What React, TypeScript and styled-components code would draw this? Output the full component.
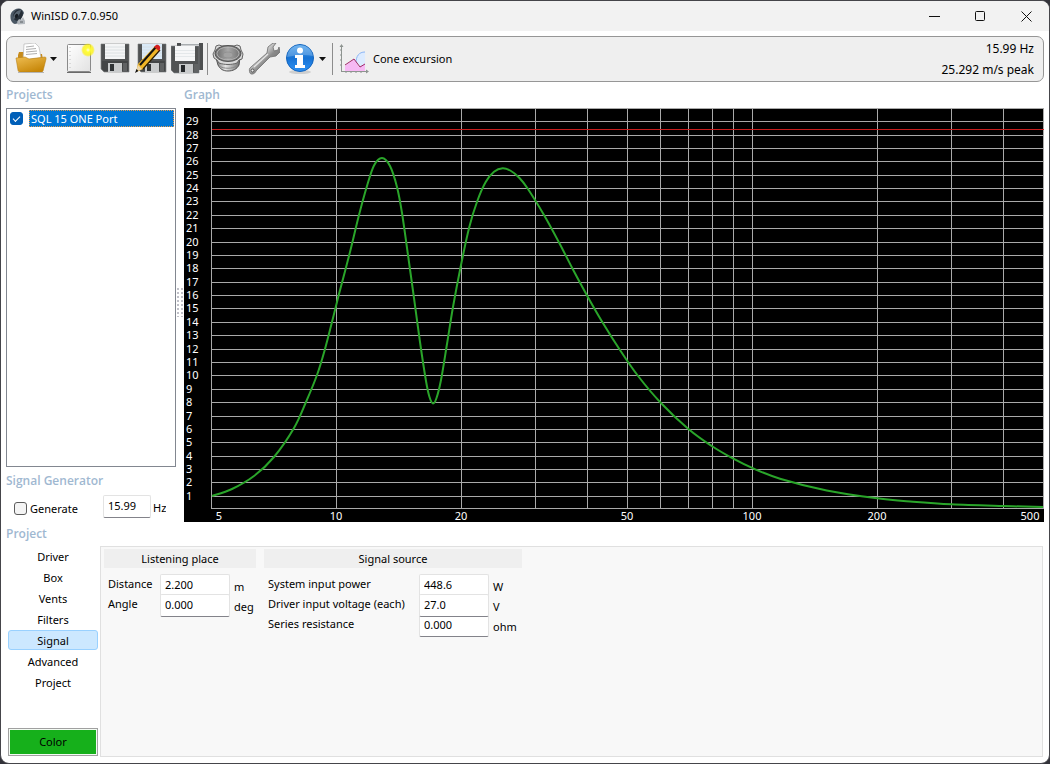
import React from "react";
import styled, { createGlobalStyle, css } from "styled-components";

const GlobalStyle = createGlobalStyle`
  *, *::before, *::after { box-sizing: border-box; }
  body {
    margin: 0;
    background: #33333a;
    color: #000;
    font: 12px/16px "Noto Sans", "Open Sans", sans-serif;
  }
  button, input { font: inherit; color: inherit; }
`;

const Window = styled.div`
  min-height: 100vh;
  display: flex;
  flex-direction: column;
  background: #fff;
  border: 1px solid #45454a;
  border-radius: 9px;
  overflow: hidden;
`;

const TitleBar = styled.header`
  display: flex;
  align-items: center;
  height: 30px;
  background: #f2f2f2;
  padding-left: 8px;
`;

const Title = styled.h1`
  flex: 1;
  margin: 0 0 0 5px;
  font-size: 11px;
  font-weight: 400;
`;

const CaptionButton = styled.button`
  display: grid;
  place-items: center;
  width: 46px;
  height: 30px;
  padding: 0;
  border: 0;
  background: none;
`;

const Toolbar = styled.div`
  display: flex;
  align-items: center;
  gap: 4px;
  height: 46px;
  margin: 5px 5px 0;
  padding: 0 9px 0 8px;
  border: 1px solid #969696;
  border-radius: 7px;
  background: #efefef;
`;

const ToolButton = styled.button`
  display: flex;
  align-items: center;
  gap: 4px;
  padding: 0;
  border: 0;
  background: none;
  font-size: 11px;
  line-height: 14px;
`;

const DropButton = styled(ToolButton)`
  width: 12px;
  height: 32px;
  margin-left: -4px;
  justify-content: center;
`;

const Separator = styled.span`
  width: 1px;
  height: 32px;
  background: #8c8c8c;
`;

const Readout = styled.output`
  margin-left: auto;
  text-align: right;
  line-height: 21px;
`;

const Upper = styled.main`
  display: grid;
  grid-template-columns: 170px 8px minmax(0, 1fr);
  padding: 0 5px;
`;

const Column = styled.section`
  display: flex;
  flex-direction: column;
`;

const Heading = styled.h2<{ $height: number }>`
  display: flex;
  align-items: center;
  height: ${(p) => p.$height}px;
  margin: 0;
  font-family: "Open Sans", "Noto Sans", sans-serif;
  font-size: 12px;
  font-weight: 600;
  color: #9fb8d1;
`;

const ProjectList = styled.ul`
  flex: 1;
  margin: 0;
  padding: 1px;
  list-style: none;
  border: 1px solid #828790;
`;

const ProjectItem = styled.li`
  label {
    display: flex;
    align-items: center;
    gap: 6px;
    padding-left: 2px;
  }
`;

const ProjectName = styled.span`
  flex: 1;
  height: 17px;
  padding-left: 1px;
  border: 1px dotted #e89c4a;
  background: #0078d7;
  color: #fff;
  font-size: 11px;
  line-height: 15px;
`;

const Tick = styled.input`
  appearance: none;
  width: 13px;
  height: 13px;
  margin: 0;
  border: 1px solid #5c5c5c;
  border-radius: 3px;
  background: #f4f4f4;
  display: grid;
  place-items: center;
  &:checked {
    border-color: #005fb8;
    background: #005fb8;
  }
  &:checked::after {
    content: "";
    width: 7px;
    height: 4px;
    border: solid #fff;
    border-width: 0 0 1px 1px;
    transform: rotate(-45deg);
    margin-bottom: 2px;
  }
`;

const GeneratorRow = styled.div`
  display: flex;
  align-items: flex-start;
  height: 27px;
  padding-left: 8px;
  font-size: 11px;
  label {
    display: flex;
    align-items: center;
    gap: 3px;
    width: 89px;
    height: 27px;
  }
`;

const Field = styled.input<{ $width: number }>`
  width: ${(p) => p.$width}px;
  height: 23px;
  padding: 0 0 3px 4px;
  border: 1px solid #e3e3e3;
  border-bottom-color: #83838a;
  border-radius: 2px;
  background: #fff;
  font-size: 11px;
`;

const Unit = styled.span<{ $gap?: number }>`
  height: 17px;
  margin-top: 4px;
  padding-left: ${(p) => p.$gap ?? 4}px;
  overflow: hidden;
  line-height: 18px;
`;

const Splitter = styled.div`
  display: grid;
  place-items: center;
  i {
    width: 8px;
    height: 30px;
    background: radial-gradient(circle at 2px 2px, #c0c0c8 1px, transparent 1px) 0 0 / 4px 4px;
  }
`;

const Chart = styled.svg`
  display: block;
  width: 100%;
  height: auto;
  background: #000;
  text {
    fill: #fff;
    font: 11px "Noto Sans", "Open Sans", sans-serif;
  }
`;

const Lower = styled.section`
  flex: 1;
  display: flex;
  gap: 2px;
  padding: 0 6px 6px 7px;
`;

const Nav = styled.nav`
  display: flex;
  flex-direction: column;
  gap: 1px;
  width: 90px;
`;

const NavButton = styled.button<{ $active?: boolean }>`
  height: 20px;
  padding: 1px 0 0;
  border: 1px solid transparent;
  border-radius: 3px;
  background: none;
  font-size: 11px;
  line-height: 18px;
  ${(p) =>
    p.$active &&
    css`
      border-color: #99d1ff;
      background: #cce8ff;
    `}
`;

const ColorButton = styled.button`
  height: 28px;
  margin: auto 0 1px;
  padding: 0;
  border: 1px solid #a0a0a0;
  background: #16b01b;
  box-shadow: inset 0 0 0 1px #f4fbf4;
  font-size: 11px;
`;

const Panel = styled.div`
  flex: 1;
  display: flex;
  align-items: flex-start;
  gap: 8px;
  padding: 2px 3px;
  border: 1px solid #e0e0e0;
  background: #f8f8f8;
`;

const Group = styled.fieldset<{ $width: number }>`
  width: ${(p) => p.$width}px;
  margin: 0;
  padding: 0;
  border: 0;
  font-size: 11px;
`;

const GroupTitle = styled.legend`
  width: 100%;
  height: 19px;
  margin-bottom: 6px;
  padding: 0;
  background: #efefef;
  line-height: 19px;
  text-align: center;
`;

const FieldRow = styled.div<{ $labelWidth: number; $under?: boolean }>`
  display: grid;
  grid-template-columns: ${(p) => p.$labelWidth}px 70px 1fr;
  position: relative;
  z-index: ${(p) => (p.$under ? 0 : 1)};
  height: 20px;
  padding-left: 4px;
  label {
    line-height: 20px;
    white-space: nowrap;
  }
`;

/* ---- icons ---- */

const AppIcon = () => (
  <svg width="17" height="17" viewBox="0 0 17 17" aria-hidden="true">
    <path d="M9.500.5C4 1 1 5 1.500 9.500c0 3 2 6 4.500 6.500l4-1 2-4 3-6c-1-3-3-4.700-5.500-4.500z" fill="#4a5764" />
    <ellipse cx="9" cy="7" rx="4.500" ry="6" transform="rotate(28 9 7)" fill="#252d36" />
    <path d="M4 11c0-5 4-9 8-9-1 5-4 8-8 9z" fill="#5a6672" />
    <ellipse cx="7.500" cy="8" rx="1.500" ry="2.200" transform="rotate(28 7.500 8)" fill="#161b21" />
    <path d="M8 14l2-3 2 1 2-3 2 4v3l-7 .5z" fill="#b3b8bd" />
    <path d="M11 14h3" stroke="#5c6266" />
  </svg>
);

const FolderIcon = () => (
  <svg width="32" height="32" viewBox="0 0 32 32" aria-hidden="true">
    <defs>
      <linearGradient id="folder" x1="0" y1="0" x2="0.6" y2="1">
        <stop offset="0" stopColor="#eebd52" />
        <stop offset="1" stopColor="#c78709" />
      </linearGradient>
    </defs>
    <path d="M3 12l1-3h5l3 2h15l1 6H3z" fill="#c78b1b" />
    <path d="M9 1l11-1 4 4 2 11-18 2z" fill="#fff" stroke="#b9b9b9" strokeWidth=".7" />
    <path d="M11 4l8-1M11 6.500l10-1M11 9l11-1M11 11.500l11-1" stroke="#9b9b9b" strokeWidth=".8" />
    <path d="M1 15l9-1 4 2 16-2c1 0 1 1 1 2l-3 12-1 1H5c-1 0-2-1-2-2z" fill="url(#folder)" stroke="#b97f12" strokeWidth=".6" />
    <path d="M3 29.500h26" stroke="#b4b4b4" />
  </svg>
);

const NewIcon = () => (
  <svg width="32" height="32" viewBox="0 0 32 32" aria-hidden="true">
    <defs>
      <radialGradient id="star">
        <stop offset="0" stopColor="#fffde0" />
        <stop offset=".3" stopColor="#ffff3a" />
        <stop offset=".75" stopColor="#fff200" stopOpacity=".7" />
        <stop offset="1" stopColor="#fff200" stopOpacity="0" />
      </radialGradient>
      <linearGradient id="sheet" x2="1" y2="1">
        <stop offset="0" stopColor="#fff" />
        <stop offset="1" stopColor="#e2e2e2" />
      </linearGradient>
    </defs>
    <rect x="4.500" y="1.500" width="23" height="27" rx="1" fill="url(#sheet)" stroke="#8a8a8a" />
    <path d="M7 4v23" stroke="#bdbdbd" strokeDasharray="1 3" />
    <path d="M4 29.500h24" stroke="#6a6a6a" />
    <circle cx="25" cy="7" r="7" fill="url(#star)" />
  </svg>
);

const Floppy = ({ label = "#f4f5f6" }: { label?: string }) => (
  <>
    <path d="M2 1h28v28H5l-3-3z" fill="#505253" stroke="#77797a" strokeWidth=".6" />
    <path d="M3 18h26v10H5l-2-2z" fill="#434546" />
    <path d="M6 1h20v15H6z" fill={label} />
    <path d="M6 4h20M6 7h20M6 10h20M6 13h20" stroke="#d5dade" strokeWidth=".8" />
    <path d="M9 20h14v9H9z" fill="#c9cbcc" />
    <path d="M11 21h4v7h-4z" fill="#303335" />
    <path d="M24 20h4v8h-4z" fill="#606263" />
  </>
);

const SaveIcon = () => (
  <svg width="32" height="32" viewBox="0 0 32 32" aria-hidden="true">
    <Floppy />
  </svg>
);

const EditIcon = () => (
  <svg width="32" height="32" viewBox="0 0 32 32" aria-hidden="true">
    <g transform="translate(1 0)">
      <Floppy label="#d9e9f7" />
    </g>
    <path d="M1 29l2-8 17-18 5 4L8 26z" fill="#f0b628" />
    <path d="M5 22L21 4" stroke="#111" strokeWidth="2" />
    <path d="M8 26L25 7" stroke="#2b1c00" strokeWidth="1.200" />
    <path d="M19 4l2-2c2-1 5 1 4 4l-1 2z" fill="#d31f1f" />
    <path d="M1 29l2-7 4 4z" fill="#ecd6aa" />
    <path d="M0 30l1.500-4 2 2z" fill="#111" />
  </svg>
);

const SaveAllIcon = () => (
  <svg width="32" height="32" viewBox="0 0 32 32" aria-hidden="true">
    <path d="M6 0h26v27H6z" fill="#4d4f50" />
    <path d="M10 0h18v12H10z" fill="#eef0f1" />
    <path d="M10 1.500h18" stroke="#a9adb0" />
    <path d="M0 3h28v27H3l-3-3z" fill="#515354" stroke="#84878a" strokeWidth=".6" />
    <path d="M4 3h20v15H4z" fill="#f6f7f8" />
    <path d="M4 7.500h20M4 10.500h20M4 13.500h20" stroke="#dfe3e6" strokeWidth=".8" />
    <path d="M8 21h14v9H8z" fill="#c9cbcc" />
    <path d="M10 22h4v7h-4z" fill="#25282a" />
    <path d="M23 21h4v8h-4z" fill="#606263" />
  </svg>
);

const DriverIcon = () => (
  <svg width="32" height="32" viewBox="0 0 32 32" aria-hidden="true">
    <defs>
      <linearGradient id="cone">
        <stop offset="0" stopColor="#717171" />
        <stop offset=".5" stopColor="#a9a9a9" />
        <stop offset="1" stopColor="#777" />
      </linearGradient>
      <linearGradient id="basket">
        <stop offset="0" stopColor="#777" />
        <stop offset=".4" stopColor="#e4e4e4" />
        <stop offset="1" stopColor="#6d6d6d" />
      </linearGradient>
    </defs>
    <path d="M4 15l2 7c2 4 5 6 10 6s9-2 11-6l1-7z" fill="url(#basket)" stroke="#555" />
    <path d="M7 23c5 3 13 3 18 0" fill="none" stroke="#888" />
    <path d="M4 3l3-1 3 1h12l3-1 3 1 1 4 2 4-1 5-3 1-2 3c-6 2-12 2-18 0l-2-3-3-2-1-4 2-4z" fill="#d8d8d8" stroke="#666" />
    <ellipse cx="16" cy="10.500" rx="13" ry="8" fill="#747474" stroke="#555" />
    <ellipse cx="16" cy="10.500" rx="11" ry="6.500" fill="url(#cone)" stroke="#c4c4c4" strokeWidth=".7" />
    <ellipse cx="16" cy="12" rx="5" ry="3" fill="#a2a2a2" stroke="#8c8c8c" strokeWidth=".7" />
  </svg>
);

const WrenchIcon = () => (
  <svg width="32" height="32" viewBox="0 0 32 32" aria-hidden="true">
    <defs>
      <linearGradient id="steel" x2="1" y2="1">
        <stop offset=".3" stopColor="#eeeeee" />
        <stop offset=".55" stopColor="#8b8b8b" />
        <stop offset="1" stopColor="#5b5b5b" />
      </linearGradient>
    </defs>
    <path
      d="M20 4l5-4 3 0-3 4 1 4 4-1 1-3 1 5-4 4-6 1L8 28c-1 3-5 4-6 2s-1-5 1-6L19 10z"
      fill="url(#steel)"
      stroke="#777"
      strokeWidth=".9"
    />
    <path d="M6 24L20 11" stroke="#e6e6e6" strokeWidth="1.200" />
    <circle cx="4.500" cy="27.500" r="1.500" fill="#eee" stroke="#555" />
  </svg>
);

const InfoIcon = () => (
  <svg width="32" height="32" viewBox="0 0 32 32" aria-hidden="true">
    <defs>
      <linearGradient id="info" x2="0" y2="1">
        <stop offset="0" stopColor="#4ba2ed" />
        <stop offset=".5" stopColor="#1772d3" />
        <stop offset="1" stopColor="#2e92f5" />
      </linearGradient>
    </defs>
    <ellipse cx="16" cy="29" rx="11" ry="2" fill="#cfcfcf" />
    <circle cx="16" cy="15" r="13.500" fill="url(#info)" stroke="#1264be" />
    <path d="M3 14C4 6 9 2 16 2s12 4 13 11c-8-2-17-1-26 1z" fill="#fff" opacity=".22" />
    <circle cx="16" cy="7.500" r="3" fill="#fff" />
    <path d="M11 12h8v10h2v3H11v-3h2v-7h-2z" fill="#fff" />
  </svg>
);

const ChartIcon = () => (
  <svg width="32" height="32" viewBox="0 0 32 32" aria-hidden="true">
    <path d="M19 18c1-6 4-9 9-9v12l-5 3z" fill="#dcebff" />
    <path d="M19 20c0-7 3-11 9-11" fill="none" stroke="#8ab5f5" />
    <path d="M8 23l9-7 5 8 6-3v7H8z" fill="#f6b9f4" />
    <path d="M8 22l9-6 6 8 5-3" fill="none" stroke="#a02a67" />
    <path d="M4.500 2v27M4 28.500h27M3 7h2M3 12h2M3 17h2M3 22h2M9 28v2M14 28v2M19 28v2M24 28v2" stroke="#8e9490" fill="none" />
    <path d="M2.500 4l2-3 2 3zM29 26.500l3 2-3 2z" fill="#8e9490" />
  </svg>
);

const Caret = () => (
  <svg width="7" height="4" viewBox="0 0 7 4" aria-hidden="true">
    <path d="M0 0h7L3.500 4z" fill="#111" />
  </svg>
);

/* ---- graph ---- */

const PLOT = { left: 27, right: 859, top: 0, bottom: 400 };
const xOf = (hz: number) => Math.floor(27.15 + 416.2 * Math.log10(hz / 5)) + 0.5;
const yOf = (v: number) => Math.floor(401.7 - 13.38 * v) + 0.5;

const FREQUENCIES = [10, 20, 30, 40, 50, 60, 70, 80, 90, 100, 200, 300, 400];
const LEVELS = Array.from({ length: 29 }, (_, i) => i + 1);
const TICKS: [number, number][] = [
  [5, 35], [10, 152], [20, 277], [50, 443], [100, 568], [200, 693], [500, 846],
];

const RESPONSE: [number, number][] = [
  [28, 388], [48, 381], [70, 368], [90, 349], [110, 320], [122, 294], [133, 267], [141, 241], [148, 214],
  [155, 186], [166, 144], [175, 107], [183, 78], [190, 57.5], [198, 50], [206, 58], [213, 79], [218, 105],
  [224, 147], [230, 190], [236, 234], [242, 273], [245.5, 289], [249, 295.5], [252.5, 290], [257, 272],
  [263, 236], [269, 199], [277, 157], [285.3, 119], [293.3, 93], [301.7, 74], [310, 63.7],
  [318.7, 60.3], [327, 63], [335, 69.5], [343.3, 80], [360, 107], [375.3, 135], [388.7, 161],
  [403.7, 188.7], [418.3, 214], [435.3, 241], [453.7, 267.5], [476.7, 294.7],
  [504.7, 321.3], [527.7, 338], [549.3, 350.7], [568.7, 360.2], [596, 370.7], [642.7, 382.5],
  [693, 390.3], [729, 393.7], [767.7, 396.3], [819, 398], [859, 399],
];

/* Catmull-Rom spline through the response points, as cubic segments. */
const spline = (pts: [number, number][]) =>
  pts.slice(1).reduce((d, p, i) => {
    const a = pts[Math.max(i - 1, 0)];
    const b = pts[i];
    const n = pts[Math.min(i + 2, pts.length - 1)];
    const c1 = [b[0] + (p[0] - a[0]) / 6, b[1] + (p[1] - a[1]) / 6];
    const c2 = [p[0] - (n[0] - b[0]) / 6, p[1] - (n[1] - b[1]) / 6];
    return `${d}C${c1.join(" ")} ${c2.join(" ")} ${p.join(" ")}`;
  }, `M${pts[0].join(" ")}`);

const Graph = () => (
  <Chart viewBox="0 0 860 414" role="img" aria-label="Response graph">
    <g stroke="#a9a9a9" shapeRendering="crispEdges">
      {LEVELS.map((v) => (
        <line key={v} x1={PLOT.left} x2={PLOT.right} y1={yOf(v)} y2={yOf(v)} />
      ))}
      {FREQUENCIES.map((f) => (
        <line key={f} x1={xOf(f)} x2={xOf(f)} y1={PLOT.top} y2={PLOT.bottom} />
      ))}
      <rect x="27.500" y=".5" width="832" height="400" fill="none" />
    </g>
    <rect x="28" y="21" width="832" height="1" fill="#c81e1e" />
    <path d={spline(RESPONSE)} fill="none" stroke="#2aa52a" strokeWidth="2" />
    {LEVELS.map((v) => (
      <text key={v} x="2" y={yOf(v) + 3.5}>
        {v}
      </text>
    ))}
    {TICKS.map(([f, x]) => (
      <text key={f} x={x} y="412" textAnchor="middle">
        {f}
      </text>
    ))}
  </Chart>
);

/* ---- form ---- */

type FieldSpec = { id: string; label: string; value: string; unit: string };

const LISTENING: FieldSpec[] = [
  { id: "distance", label: "Distance", value: "2.200", unit: "m" },
  { id: "angle", label: "Angle", value: "0.000", unit: "deg" },
];

const SOURCE: FieldSpec[] = [
  { id: "power", label: "System input power", value: "448.6", unit: "W" },
  { id: "voltage", label: "Driver input voltage (each)", value: "27.0", unit: "V" },
  { id: "resistance", label: "Series resistance", value: "0.000", unit: "ohm" },
];

const FieldGroup = ({ title, width, labelWidth, fields }: {
  title: string;
  width: number;
  labelWidth: number;
  fields: FieldSpec[];
}) => (
  <Group $width={width}>
    <GroupTitle>{title}</GroupTitle>
    {fields.map((f, i) => (
      <FieldRow key={f.id} $labelWidth={labelWidth} $under={i === 2}>
        <label htmlFor={f.id}>{f.label}</label>
        <Field id={f.id} $width={70} defaultValue={f.value} />
        <Unit>{f.unit}</Unit>
      </FieldRow>
    ))}
  </Group>
);

const PAGES = ["Driver", "Box", "Vents", "Filters", "Signal", "Advanced", "Project"];

export default function App() {
  return (
    <>
      <GlobalStyle />
      <Window>
        <TitleBar>
          <AppIcon />
          <Title>WinISD 0.7.0.950</Title>
          <CaptionButton aria-label="Minimize">
            <svg width="11" height="11"><path d="M0 5.500h11" stroke="#111" /></svg>
          </CaptionButton>
          <CaptionButton aria-label="Maximize">
            <svg width="11" height="11"><rect x=".5" y=".5" width="9" height="9" rx="1" fill="none" stroke="#111" /></svg>
          </CaptionButton>
          <CaptionButton aria-label="Close">
            <svg width="11" height="11"><path d="M.5.5l10 10M10.500.5l-10 10" stroke="#111" /></svg>
          </CaptionButton>
        </TitleBar>

        <Toolbar>
          <ToolButton aria-label="Open project"><FolderIcon /></ToolButton>
          <DropButton aria-label="Recent projects"><Caret /></DropButton>
          <ToolButton aria-label="New project"><NewIcon /></ToolButton>
          <ToolButton aria-label="Save"><SaveIcon /></ToolButton>
          <ToolButton aria-label="Save as"><EditIcon /></ToolButton>
          <ToolButton aria-label="Save all"><SaveAllIcon /></ToolButton>
          <Separator />
          <ToolButton aria-label="Drivers"><DriverIcon /></ToolButton>
          <ToolButton aria-label="Options"><WrenchIcon /></ToolButton>
          <ToolButton aria-label="About"><InfoIcon /></ToolButton>
          <DropButton aria-label="Help menu"><Caret /></DropButton>
          <Separator />
          <ToolButton><ChartIcon />Cone excursion</ToolButton>
          <Readout>15.99 Hz<br />25.292 m/s peak</Readout>
        </Toolbar>

        <Upper>
          <Column>
            <Heading $height={26}>Projects</Heading>
            <ProjectList>
              <ProjectItem>
                <label>
                  <Tick type="checkbox" defaultChecked />
                  <ProjectName>SQL 15 ONE Port</ProjectName>
                </label>
              </ProjectItem>
            </ProjectList>
            <Heading $height={28}>Signal Generator</Heading>
            <GeneratorRow>
              <label>
                <Tick type="checkbox" />
                Generate
              </label>
              <Field $width={48} defaultValue="15.99" aria-label="Generator frequency" />
              <Unit $gap={2}>Hz</Unit>
            </GeneratorRow>
          </Column>
          <Splitter><i /></Splitter>
          <Column>
            <Heading $height={26}>Graph</Heading>
            <Graph />
          </Column>
          <Heading $height={24}>Project</Heading>
        </Upper>

        <Lower>
          <Nav>
            {PAGES.map((p) => (
              <NavButton key={p} $active={p === "Signal"}>{p}</NavButton>
            ))}
            <ColorButton>Color</ColorButton>
          </Nav>
          <Panel>
            <FieldGroup title="Listening place" width={152} labelWidth={52} fields={LISTENING} />
            <FieldGroup title="Signal source" width={258} labelWidth={151} fields={SOURCE} />
          </Panel>
        </Lower>
      </Window>
    </>
  );
}
